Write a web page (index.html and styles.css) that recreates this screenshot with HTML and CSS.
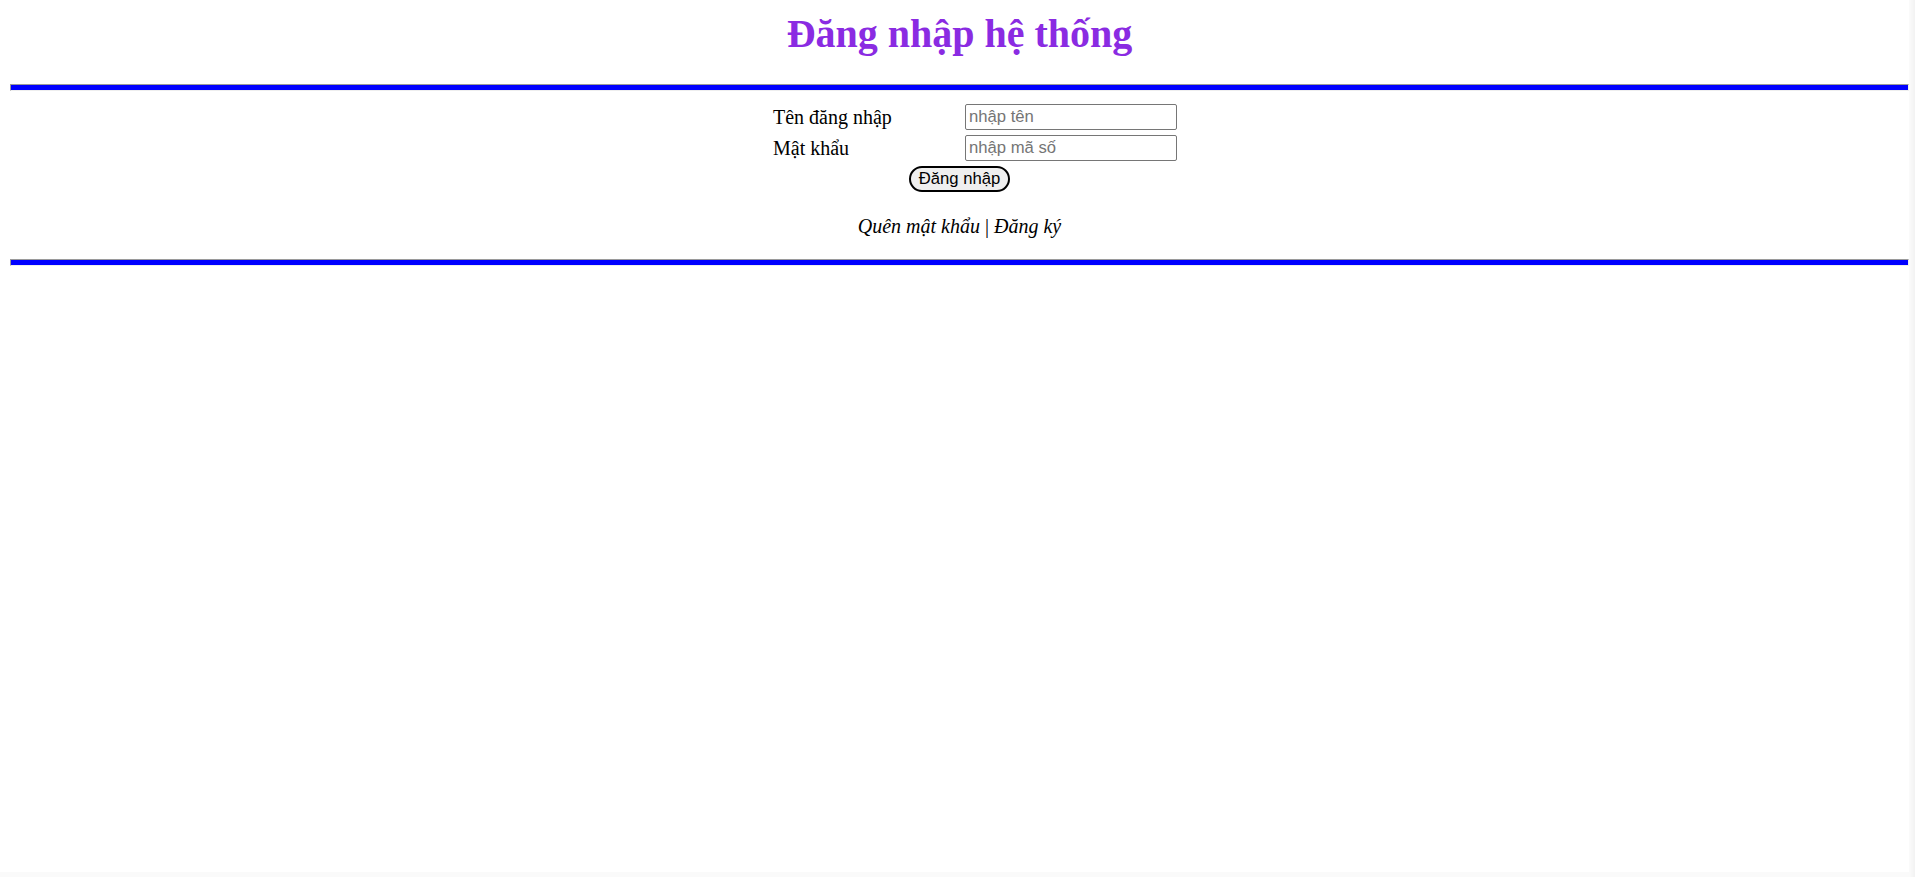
FILE: index.html
```html
<!DOCTYPE html>
<html lang="vi">
<head>
<meta charset="utf-8">
<title>Đăng nhập hệ thống</title>
<link rel="stylesheet" href="styles.css">
</head>
<body>
<h1 class="title">Đăng nhập hệ thống</h1>
<hr class="rule">
<form class="login">
  <div class="fields">
    <label class="label" for="user">Tên đăng nhập</label>
    <input class="field" id="user" type="text" placeholder="nhập tên">
    <label class="label" for="pass">Mật khẩu</label>
    <input class="field" id="pass" type="password" placeholder="nhập mã số">
  </div>
  <div class="actions">
    <button class="submit" type="submit">Đăng nhập</button>
  </div>
</form>
<p class="links"><span class="link">Quên mật khẩu</span> | <span class="link">Đăng ký</span></p>
<hr class="rule">
<div class="edge-right"></div>
<div class="edge-bottom"></div>
</body>
</html>
```

FILE: styles.css
```css
html {
  background: #ffffff;
}

body {
  margin: 10px 6px 10px 10px;
  font-family: "Liberation Serif", "Times New Roman", serif;
  font-size: 20px;
  color: #000000;
}

.title {
  margin: 0 0 28px;
  padding-top: 1px;
  font-size: 40px;
  line-height: 45px;
  font-weight: bold;
  text-align: center;
  color: #8a2be2;
}

.rule {
  margin: 0;
  height: 5px;
  background: #0000ff;
  border-style: solid;
  border-width: 1px;
  border-color: #9a9a9a #eeeeee #eeeeee #9a9a9a;
}

.login {
  margin: 13px 0 0;
}

.fields {
  display: grid;
  grid-template-columns: 192px 212px;
  row-gap: 5px;
  justify-content: center;
  align-items: center;
  padding-left: 31px;
}

.label {
  line-height: normal;
}

.field {
  box-sizing: border-box;
  width: 212px;
  height: 26px;
  margin: 0;
  padding: 0 3px;
  border: 1px solid #767676;
  border-radius: 2px;
  font-family: "Liberation Sans", Arial, sans-serif;
  font-size: 16.67px;
  color: #000000;
  background: #ffffff;
}

.field::placeholder {
  color: #757575;
}

.actions {
  display: flex;
  justify-content: center;
  margin-top: 5px;
}

.submit {
  box-sizing: border-box;
  height: 26px;
  margin: 0;
  padding: 0 8px;
  border: 2px solid #000000;
  border-radius: 13px;
  background: #efefef;
  font-family: "Liberation Sans", Arial, sans-serif;
  font-size: 16.67px;
  color: #000000;
}

.links {
  margin: 23px 0 21px;
  text-align: center;
  line-height: normal;
}

.link {
  font-style: italic;
}

.edge-right {
  position: fixed;
  top: 0;
  right: 0;
  bottom: 0;
  width: 6px;
  background: linear-gradient(to right, #fbfbfb, #f2f2f2);
}

.edge-bottom {
  position: fixed;
  left: 0;
  right: 6px;
  bottom: 0;
  height: 5px;
  background: #fafafa;
}
```
